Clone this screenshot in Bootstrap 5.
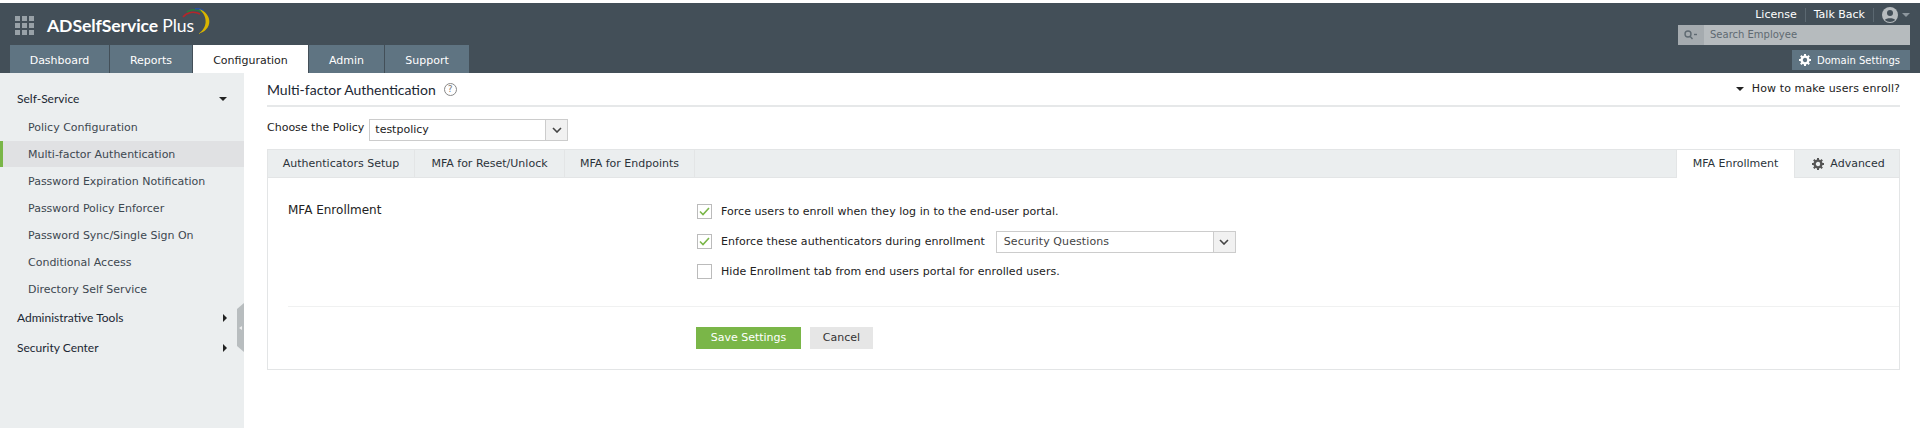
<!DOCTYPE html>
<html lang="en">
<head>
<meta charset="utf-8">
<title>ADSelfService Plus</title>
<link href="https://cdn.jsdelivr.net/npm/bootstrap@5.3.0/dist/css/bootstrap.min.css" rel="stylesheet">
<style>
html,body{height:428px;overflow:hidden}
body{font-family:"DejaVu Sans",sans-serif;font-size:11px;color:#222;background:#fff;padding-top:3px}
a{text-decoration:none;color:inherit}
.hdr{height:70px;background:#434f58;position:relative}
.brand-row{height:42px;padding:11px 0 0 15px}
.dots{width:19px;height:19px;display:grid;grid-template-columns:repeat(3,5px);gap:2px;margin-top:2px}
.dots i{background:#98a1a7;display:block}
.logo-text{font-family:Lato,sans-serif;font-size:17.6px;color:#fff;font-weight:700;margin-left:13px;line-height:24px;letter-spacing:-.1px}
.logo-text span{font-weight:400}
.logo-mark{left:134px;top:-6px}
.main-tabs{padding-left:10px;gap:1px;height:28px}
.main-tabs a{background:#5f7482;color:#fff;line-height:31px;text-align:center;font-size:11px}
.main-tabs a.on{background:#fff;color:#222}
.hdr-right{position:absolute;right:10px;top:0;width:232px;color:#fff}
.toplinks{height:22px;font-size:11px;gap:8px;padding-top:2px}
.toplinks .sep{width:1px;height:14px;background:#5b6871}
.searchbox{height:20px;background:#b6bbbe;color:#5f6a72;font-size:10px;line-height:22px}
.searchbox .sic{width:26px;height:20px;background:#a5abaf}
.searchbox .ph{padding-left:6px}
.dombtn{background:#5f7482;color:#fff;height:20px;width:118px;margin-top:5px;margin-left:auto;font-size:10px;gap:6px;padding-left:7px}
.side{width:244px;height:355px;background:#ebeeef;position:relative;flex:none;padding-top:12px}
.side-head{font-family:Lato,sans-serif;font-size:12px;color:#1b2733;padding:0 17px;height:30px}
.side-head.first{height:29px;padding-bottom:2px}
.side-item{height:27px;line-height:27px;padding-left:28px;color:#3d4750;font-size:11px}
.side-item.on{background:#e0e1e3;border-left:3px solid #7ab648;padding-left:25px;height:26px;margin-bottom:1px}
.caret-d{width:0;height:0;border-left:4px solid transparent;border-right:4px solid transparent;border-top:4px solid #222}
.caret-r{width:0;height:0;border-top:4px solid transparent;border-bottom:4px solid transparent;border-left:4px solid #222}
.caret-u{border-top-color:#8d979e}
.collapse-h{position:absolute;right:0;top:230px;width:7px;height:49px;background:#b8bdbf;clip-path:polygon(100% 0,100% 100%,0 88%,0 12%);display:flex;align-items:center;justify-content:center}
.collapse-h i{width:0;height:0;border-top:2px solid transparent;border-bottom:2px solid transparent;border-right:3px solid #eee}
.content{flex:1;padding:0 20px 0 23px;min-width:0}
.title-row{height:34px;border-bottom:2px solid #e6e8e9}
.page-title{font-family:Lato,sans-serif;font-size:14px;color:#1b2733}
.helpq{width:13px;height:13px;border:1px solid #888;border-radius:50%;font-size:9px;color:#777;line-height:11px;text-align:center;margin-left:8px;display:inline-block}
.enroll-link{letter-spacing:.1px}
.policy-row{height:42px;gap:5px}
.sel{border:1px solid #ccc;display:flex;height:22px;background:#fff}
.sel .val{flex:1;padding-left:5px;line-height:20px;color:#222}
.sel .arr{width:22px;background:#f1f1f1;border-left:1px solid #ccc;display:flex;align-items:center;justify-content:center}
.policy-sel{width:199px;margin-top:3px}
.panel-box{border:1px solid #e3e5e6;height:221px}
.ptabs{height:28px;background:#ebeeef;border-bottom:1px solid #e3e5e6}
.ptabs a{line-height:28px;text-align:center;border-right:1px solid #e3e5e6;color:#2b333a;height:27px}
.ptabs a.on{background:#fff;height:28px;border-left:1px solid #e3e5e6}
.ptabs a.last{border-right:0;gap:6px;padding-left:3px}
.pbody{height:128px}
.sec-label{width:428px;font-size:12px;padding:23px 0 0 20px;color:#222;flex:none}
.opts{padding-top:18px;letter-spacing:.05px}
.opt{height:30px;gap:9px}
.opt-text{padding-top:2px}
.cbx{width:15px;height:15px;border:1px solid #bbb;background:#fff;flex:none;display:flex;align-items:center;justify-content:center;margin-left:1px}
.enroll-sel{width:240px;margin:2px 0 0 2px}
.enroll-sel .val{padding-left:7px;color:#444;letter-spacing:.1px}
.rule{border-top:1px solid #f0f1f1;margin:0 0 0 20px}
.btns{padding:20px 0 0 428px;gap:9px}
.btn-save{background:#7ab648;color:#fff;width:105px;height:22px;line-height:22px;text-align:center;font-size:11px}
.btn-cancel{background:#e6e6e6;color:#333;width:63px;height:22px;line-height:22px;text-align:center;font-size:11px}
</style>
</head>
<body>
<header class="hdr">
  <div class="brand-row d-flex">
    <div class="dots"><i></i><i></i><i></i><i></i><i></i><i></i><i></i><i></i><i></i></div>
    <div class="logo-text position-relative">ADSelfService <span>Plus</span>
      <svg width="36" height="30" viewBox="0 0 36 30" class="position-absolute logo-mark" fill="none">
        <path d="M2 9C6 4 13 3 19 6" stroke="#b5262a" stroke-width="1.6"/>
        <path d="M6 4C10 1 17 1 21 4" stroke="#2b7a3d" stroke-width="1.6"/>
        <path d="M14 1C17 0 20 1 23 3" stroke="#274f9e" stroke-width="1.6"/>
        <path d="M18 1C32 6 32 22 17 26C26 21 28 9 18 1Z" fill="#d9b400"/>
      </svg>
    </div>
  </div>
  <nav class="main-tabs d-flex">
    <a href="#" style="width:99px">Dashboard</a>
    <a href="#" style="width:82px">Reports</a>
    <a href="#" class="on" style="width:115px">Configuration</a>
    <a href="#" style="width:75px">Admin</a>
    <a href="#" style="width:84px">Support</a>
  </nav>
  <div class="hdr-right">
    <div class="toplinks d-flex align-items-center justify-content-end">
      <a href="#">License</a><span class="sep"></span>
      <a href="#">Talk Back</a><span class="sep"></span>
      <span class="d-flex align-items-center gap-1">
        <svg width="16" height="16" viewBox="0 0 16 16"><circle cx="8" cy="8" r="8" fill="#b6bbbe"/><circle cx="8" cy="6" r="3" fill="#434f58"/><path d="M2.8 13C4 10.5 12 10.5 13.2 13A8 8 0 0 1 2.8 13Z" fill="#434f58"/></svg>
        <span class="caret-d caret-u"></span>
      </span>
    </div>
    <div class="searchbox d-flex align-items-center">
      <span class="sic d-flex align-items-center justify-content-center">
        <svg width="14" height="10" viewBox="0 0 14 10" fill="none" stroke="#5f6a72" stroke-width="1.4"><circle cx="4" cy="4" r="3"/><path d="M6 6.2L8.5 9"/><path d="M10 4.5h3" /></svg>
      </span>
      <span class="ph">Search Employee</span>
    </div>
    <a href="#" class="dombtn d-flex align-items-center">
      <svg width="12" height="12" viewBox="0 0 12 12"><circle cx="6" cy="6" r="3.4" fill="none" stroke="#fff" stroke-width="2.4"/><path d="M6 0v2.4M6 9.6V12M0 6h2.4M9.6 6H12M1.8 1.8l1.7 1.7M8.5 8.5l1.7 1.7M10.2 1.8L8.5 3.5M3.5 8.5l-1.7 1.7" stroke="#fff" stroke-width="2"/></svg>
      <span>Domain Settings</span>
    </a>
  </div>
</header>
<div class="d-flex">
  <aside class="side">
    <div class="side-head first d-flex align-items-center justify-content-between"><span>Self-Service</span><span class="caret-d"></span></div>
    <a href="#" class="side-item d-block">Policy Configuration</a>
    <a href="#" class="side-item on d-block">Multi-factor Authentication</a>
    <a href="#" class="side-item d-block">Password Expiration Notification</a>
    <a href="#" class="side-item d-block">Password Policy Enforcer</a>
    <a href="#" class="side-item d-block">Password Sync/Single Sign On</a>
    <a href="#" class="side-item d-block">Conditional Access</a>
    <a href="#" class="side-item d-block">Directory Self Service</a>
    <div class="side-head d-flex align-items-center justify-content-between"><span>Administrative Tools</span><span class="caret-r"></span></div>
    <div class="side-head d-flex align-items-center justify-content-between"><span>Security Center</span><span class="caret-r"></span></div>
    <div class="collapse-h"><i></i></div>
  </aside>
  <main class="content">
    <div class="title-row d-flex align-items-center justify-content-between">
      <div class="d-flex align-items-center"><span class="page-title">Multi-factor Authentication</span><span class="helpq">?</span></div>
      <div class="d-flex align-items-center gap-2"><span class="caret-d"></span><a href="#" class="enroll-link">How to make users enroll?</a></div>
    </div>
    <div class="policy-row d-flex align-items-center">
      <span>Choose the Policy</span>
      <div class="sel policy-sel">
        <span class="val">testpolicy</span>
        <span class="arr"><svg width="10" height="6" viewBox="0 0 10 6" fill="none" stroke="#444" stroke-width="1.6"><path d="M1 1l4 4 4-4"/></svg></span>
      </div>
    </div>
    <div class="panel-box">
      <div class="ptabs d-flex">
        <a href="#" style="width:147px">Authenticators Setup</a>
        <a href="#" style="width:150px">MFA for Reset/Unlock</a>
        <a href="#" style="width:130px">MFA for Endpoints</a>
        <span class="flex-grow-1"></span>
        <a href="#" class="on" style="width:119px">MFA Enrollment</a>
        <a href="#" class="last d-flex align-items-center justify-content-center" style="width:104px">
          <svg width="12" height="12" viewBox="0 0 12 12"><circle cx="6" cy="6" r="3.4" fill="none" stroke="#555" stroke-width="2.4"/><path d="M6 0v2.4M6 9.6V12M0 6h2.4M9.6 6H12M1.8 1.8l1.7 1.7M8.5 8.5l1.7 1.7M10.2 1.8L8.5 3.5M3.5 8.5l-1.7 1.7" stroke="#555" stroke-width="2"/></svg>
          <span>Advanced</span>
        </a>
      </div>
      <div class="pbody d-flex">
        <div class="sec-label">MFA Enrollment</div>
        <div class="opts">
          <div class="opt d-flex align-items-center">
            <span class="cbx"><svg width="11" height="9" viewBox="0 0 11 9" fill="none" stroke="#7ab648" stroke-width="1.6"><path d="M1 4.5l3 3L10 1"/></svg></span>
            <span class="opt-text">Force users to enroll when they log in to the end-user portal.</span>
          </div>
          <div class="opt d-flex align-items-center">
            <span class="cbx"><svg width="11" height="9" viewBox="0 0 11 9" fill="none" stroke="#7ab648" stroke-width="1.6"><path d="M1 4.5l3 3L10 1"/></svg></span>
            <span class="opt-text">Enforce these authenticators during enrollment</span>
            <div class="sel enroll-sel">
              <span class="val">Security Questions</span>
              <span class="arr"><svg width="10" height="6" viewBox="0 0 10 6" fill="none" stroke="#444" stroke-width="1.6"><path d="M1 1l4 4 4-4"/></svg></span>
            </div>
          </div>
          <div class="opt d-flex align-items-center">
            <span class="cbx"></span>
            <span class="opt-text">Hide Enrollment tab from end users portal for enrolled users.</span>
          </div>
        </div>
      </div>
      <div class="rule"></div>
      <div class="btns d-flex">
        <a href="#" class="btn-save">Save Settings</a>
        <a href="#" class="btn-cancel">Cancel</a>
      </div>
    </div>
  </main>
</div>
<script src="https://cdn.jsdelivr.net/npm/bootstrap@5.3.0/dist/js/bootstrap.bundle.min.js"></script>
</body>
</html>
